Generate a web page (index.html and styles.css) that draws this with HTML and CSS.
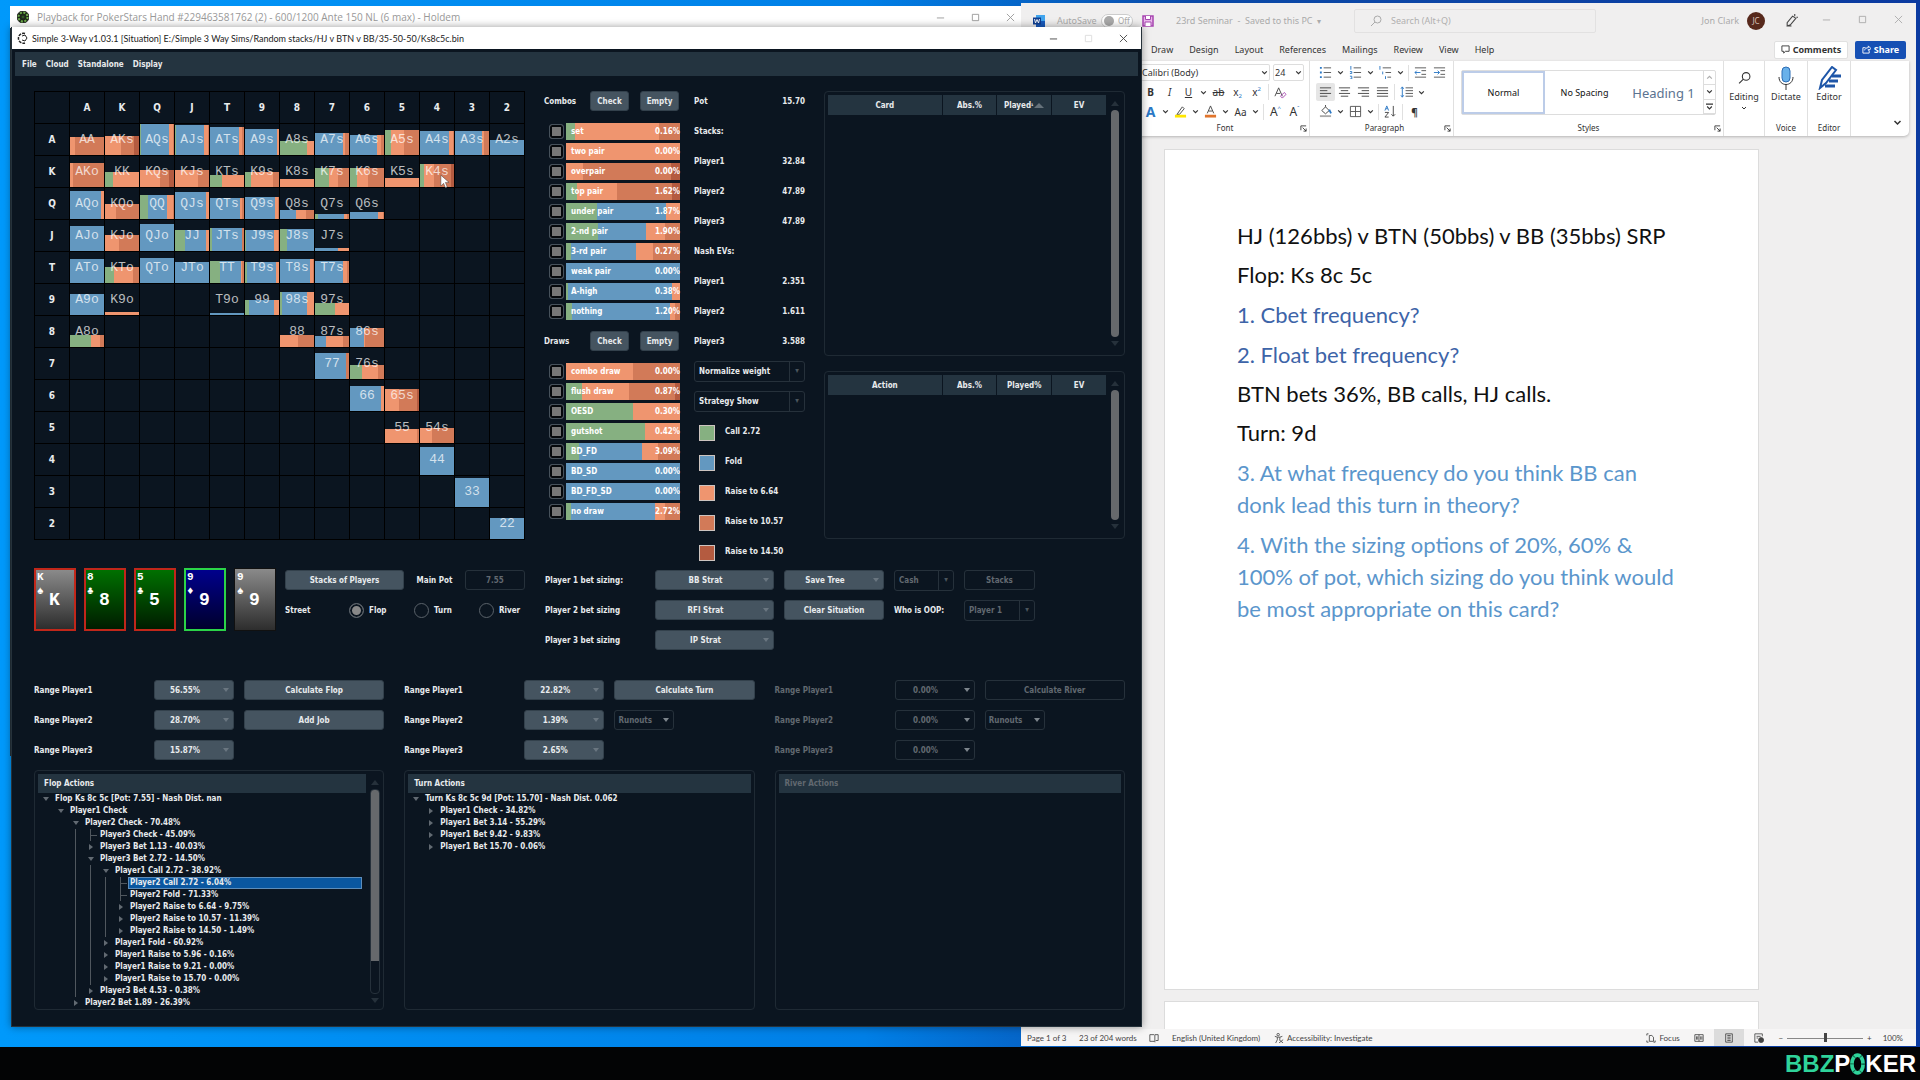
FILE: index.html
```
<!DOCTYPE html>
<html lang="en">
<head>
  <meta charset="UTF-8">
  <title>Simple 3-Way</title>
  <link rel="stylesheet" href="styles.css">
</head>
<body>
  <svg class="sprite" aria-hidden="true">
    <symbol id="min" viewBox="0 0 10 10"><path d="M1 5.5h8" /></symbol>
    <symbol id="max" viewBox="0 0 10 10"><path d="M1.5 1.5h7v7h-7z" /></symbol>
    <symbol id="close" viewBox="0 0 10 10"><path d="M1 1l8 8M9 1l-8 8" /></symbol>
    <symbol id="caret" viewBox="0 0 6 6"><path d="M1 2l2 2 2-2" /></symbol>
    <symbol id="search" viewBox="0 0 12 12"><circle cx="7.5" cy="4.5" r="3.5" /><path d="M5 7L1 11" /></symbol>
    <symbol id="launch" viewBox="0 0 8 8"><path d="M1 6V1h6M3 3l4 4M7 4v3H4" /></symbol>
  </svg>

  <div class="desktop">
    <!-- Hand replayer, behind -->
    <div class="window replayer">
      <div class="titlebar">
        <svg class="app-icon" viewBox="0 0 12 12"><circle cx="6" cy="6" r="6" fill="#1c2a17" /><circle cx="6" cy="6" r="4.5" fill="none" stroke="#6fae4c" stroke-width="2" stroke-dasharray="2 1.5" /><circle cx="6" cy="6" r="2" fill="#2e5a22" /></svg>
        <span class="title">Playback for PokerStars Hand #229463581762 (2) - 600/1200 Ante 150 NL (6 max) - Holdem</span>
        <button aria-label="Minimize"><svg><use href="#min" /></svg></button>
        <button aria-label="Maximize"><svg><use href="#max" /></svg></button>
        <button aria-label="Close"><svg><use href="#close" /></svg></button>
      </div>
    </div>

    <!-- Word -->
    <div class="window word">
      <div class="word-title">
        <svg class="word-icon" viewBox="0 0 12 12"><path d="M3 0h9v12H3z" fill="#41a5ee" /><path d="M3 6h9v6H3z" fill="#185abd" /><path d="M0 2.500h8v7H0z" fill="#103f91" /><path d="M1.500 4l1 4L4 4.500 5.500 8l1-4" fill="none" stroke="#fff" stroke-width=".9" /></svg>
        <span class="autosave">AutoSave</span>
        <button class="switch" aria-label="AutoSave off"><i></i>Off</button>
        <button class="save" aria-label="Save"><svg viewBox="0 0 12 12"><path d="M1 1h10v10H1z" fill="#e9b6ea" stroke="#a646b0" stroke-width="1.500" /><path d="M3.500 1v3.500h5V1M3 11V7h6v4" fill="#fff" stroke="#a646b0" /></svg></button>
        <span class="doc-name">23rd Seminar&nbsp; -&nbsp; Saved to this PC&nbsp; <small>▾</small></span>
        <label class="search"><svg><use href="#search" /></svg><input type="text" placeholder="Search (Alt+Q)" aria-label="Search"></label>
        <span class="user">Jon Clark</span>
        <span class="avatar">JC</span>
        <button class="pen" aria-label="Pen"><svg viewBox="0 0 12 12"><path d="M2 11V8l5-6 3 2-5 6zM3 11h3M9 0v2M12 3h-1.500" /></svg></button>
        <button class="winbtn" aria-label="Minimize"><svg><use href="#min" /></svg></button>
        <button class="winbtn" aria-label="Maximize"><svg><use href="#max" /></svg></button>
        <button class="winbtn" aria-label="Close"><svg><use href="#close" /></svg></button>
      </div>
      <nav class="tabs">
        <a href="#">Draw</a><a href="#">Design</a><a href="#">Layout</a><a href="#">References</a><a href="#">Mailings</a><a href="#">Review</a><a href="#">View</a><a href="#">Help</a>
        <button class="comments"><svg viewBox="0 0 10 10"><path d="M1 1h8v6H5L3 9V7H1z" /></svg>Comments</button>
        <button class="share"><svg viewBox="0 0 10 10"><path d="M4 3H1v6h7V6M3 6c0-2 2-3 4-3V1l3 3-3 2V4.500" /></svg>Share</button>
      </nav>
      <div class="ribbon">
        <div class="group font-group">
          <div class="tools">
            <span class="pick font-name"><select aria-label="Font"><option>Calibri (Body)</option></select><svg><use href="#caret" /></svg></span>
            <span class="pick font-size"><select aria-label="Font size"><option>24</option></select><svg><use href="#caret" /></svg></span>
          </div>
          <div class="tools">
            <button><b>B</b></button><button><em>I</em></button><button><u>U</u></button><button class="drop"><svg><use href="#caret" /></svg></button>
            <button><s>ab</s></button><button>x<sub>2</sub></button><button>x<sup>2</sup></button><hr>
            <button aria-label="Clear formatting"><svg viewBox="0 0 14 14"><path d="M1 11L5 2l4 9M2.500 8h4" stroke="#444" /><path d="M7 11l4-4 2 2-4 4z" stroke="#a646b0" /></svg></button>
          </div>
          <div class="tools">
            <button class="effects">A</button><button class="drop"><svg><use href="#caret" /></svg></button>
            <button aria-label="Highlight"><svg viewBox="0 0 14 14"><path d="M4 9l5-7 2 2-5 6H3z" stroke="#444" /><path d="M1 12h12" stroke="#ffe600" stroke-width="3" /></svg></button><button class="drop"><svg><use href="#caret" /></svg></button>
            <button aria-label="Font colour"><svg viewBox="0 0 14 14"><path d="M3.500 9L7 1l3.500 8M5 6.500h4" stroke="#444" /><path d="M1 12h12" stroke="#e0752d" stroke-width="3" /></svg></button><button class="drop"><svg><use href="#caret" /></svg></button>
            <button>Aa</button><button class="drop"><svg><use href="#caret" /></svg></button><hr>
            <button class="grow">A<sup>^</sup></button><button class="grow">A<sup>ˇ</sup></button>
          </div>
          <div class="group-name">Font<svg><use href="#launch" /></svg></div>
        </div>
        <div class="group para-group">
          <div class="tools">
            <button aria-label="Bullets"><svg viewBox="0 0 14 14"><path d="M5 2h8M5 7h8M5 12h8" stroke="#555" /><path d="M1 2h2M1 7h2M1 12h2" stroke="#2b78c5" stroke-width="2" /></svg></button><button class="drop"><svg><use href="#caret" /></svg></button>
            <button aria-label="Numbering"><svg viewBox="0 0 14 14"><path d="M5 2h8M5 7h8M5 12h8" stroke="#555" /><path d="M2 0v4M1 6h2v2H1M1 11h2v3H1" stroke="#2b78c5" /></svg></button><button class="drop"><svg><use href="#caret" /></svg></button>
            <button aria-label="Multilevel list"><svg viewBox="0 0 14 14"><path d="M4 2h9M7 7h6M9 12h4" stroke="#555" /><path d="M1 0v4M4 6v3M7 11v3" stroke="#2b78c5" /></svg></button><button class="drop"><svg><use href="#caret" /></svg></button><hr>
            <button aria-label="Outdent"><svg viewBox="0 0 14 14"><path d="M1 2h12M8 5h5M8 9h5M1 12h12" stroke="#555" /><path d="M7 7H1l2-2M1 7l2 2" stroke="#2b78c5" /></svg></button>
            <button aria-label="Indent"><svg viewBox="0 0 14 14"><path d="M1 2h12M8 5h5M8 9h5M1 12h12" stroke="#555" /><path d="M1 7h6L5 5M7 7L5 9" stroke="#2b78c5" /></svg></button>
          </div>
          <div class="tools">
            <button class="on" aria-label="Left"><svg viewBox="0 0 14 14"><path d="M1 2h12M1 5h8M1 8h12M1 11h8" stroke="#444" /></svg></button>
            <button aria-label="Centre"><svg viewBox="0 0 14 14"><path d="M1 2h12M3 5h8M1 8h12M3 11h8" stroke="#444" /></svg></button>
            <button aria-label="Right"><svg viewBox="0 0 14 14"><path d="M1 2h12M5 5h8M1 8h12M5 11h8" stroke="#444" /></svg></button>
            <button aria-label="Justify"><svg viewBox="0 0 14 14"><path d="M1 2h12M1 5h12M1 8h12M1 11h12" stroke="#444" /></svg></button><hr>
            <button aria-label="Line spacing"><svg viewBox="0 0 14 14"><path d="M6 2h8M6 5h8M6 8h8M6 11h8" stroke="#555" /><path d="M2.500 1v11M1 3l1.500-2L4 3M1 10l1.500 2L4 10" stroke="#2b78c5" /></svg></button><button class="drop"><svg><use href="#caret" /></svg></button>
          </div>
          <div class="tools">
            <button aria-label="Shading"><svg viewBox="0 0 14 14"><path d="M3 6l4-4 4 4-4 3.500zM7 2V0" stroke="#444" /><path d="M11 5l2 4" stroke="#2b78c5" stroke-width="2" /><path d="M1 12h12" stroke="#aaa" stroke-width="2" /></svg></button><button class="drop"><svg><use href="#caret" /></svg></button>
            <button aria-label="Borders"><svg viewBox="0 0 14 14"><path d="M1.500 1.500h11v11h-11zM7 1.500v11M1.500 7h11" stroke="#555" /></svg></button><button class="drop"><svg><use href="#caret" /></svg></button><hr>
            <button aria-label="Sort"><svg viewBox="0 0 14 14"><path d="M1 6l2-5 2 5M2 4h2" stroke="#2b78c5" /><path d="M1 8h4l-4 5h4M10 1v11M8 10l2 2 2-2" stroke="#444" /></svg></button><hr>
            <button><b>¶</b></button>
          </div>
          <div class="group-name">Paragraph<svg><use href="#launch" /></svg></div>
        </div>
        <div class="group style-group">
          <div class="gallery">
            <button class="current">Normal</button>
            <button>No Spacing</button>
            <button class="heading">Heading 1</button>
            <div class="gallery-nav"><button aria-label="Up"><svg class="flip"><use href="#caret" /></svg></button><button aria-label="Down"><svg><use href="#caret" /></svg></button><button aria-label="More"><svg viewBox="0 0 6 6"><path d="M0 1h6M1 3l2 2 2-2" /></svg></button></div>
          </div>
          <div class="group-name">Styles<svg><use href="#launch" /></svg></div>
        </div>
        <div class="group big">
          <button><svg class="big-icon"><use href="#search" /></svg>Editing<svg class="small"><use href="#caret" /></svg></button>
        </div>
        <div class="group big">
          <button><svg class="big-icon" viewBox="0 0 16 24"><rect x="4" y="1" width="8" height="15" rx="4" fill="#69b1ea" stroke="#2b6cb5" /><path d="M1 11c0 10 14 10 14 0M8 19v5" /></svg>Dictate</button>
          <div class="group-name">Voice</div>
        </div>
        <div class="group big">
          <button><svg class="big-icon" viewBox="0 0 24 24"><path d="M3 22l2-8L15 1l4 3L9 17z" fill="#fff" stroke="#1e56a8" stroke-width="2" /><path d="M15 10h9M12 15h9M8 20h10" stroke="#1e56a8" stroke-width="3" /></svg>Editor</button>
          <div class="group-name">Editor</div>
        </div>
        <button class="collapse" aria-label="Collapse ribbon"><svg><use href="#caret" /></svg></button>
      </div>
      <div class="canvas">
        <article class="page">
          <p>HJ (126bbs) v BTN (50bbs) v BB (35bbs) SRP</p>
          <p>Flop: Ks 8c 5c</p>
          <p class="question">1. Cbet frequency?</p>
          <p class="question">2. Float bet frequency?</p>
          <p>BTN bets 36%, BB calls, HJ calls.</p>
          <p>Turn: 9d</p>
          <p class="question light">3. At what frequency do you think BB can<br>donk lead this turn in theory?</p>
          <p class="question light">4. With the sizing options of 20%, 60% &amp;<br>100% of pot, which sizing do you think would<br>be most appropriate on this card?</p>
        </article>
        <article class="page next"></article>
      </div>
      <footer class="status">
        <span class="page-count">Page 1 of 3</span>
        <span class="words">23 of 204 words</span>
        <svg class="proof" viewBox="0 0 12 12"><path d="M6 2H1v8h5l1 1V2h4v7H8" /></svg>
        <span class="lang">English (United Kingdom)</span>
        <svg viewBox="0 0 12 12"><circle cx="5" cy="2" r="1.500" /><path d="M1 4l3 1h3l3-1M4 5v3l-2 4M7 5v3M6 8l5 4M11 8l-5 4" /></svg>
        <span>Accessibility: Investigate</span>
        <span class="view-tools">
          <svg viewBox="0 0 12 12"><path d="M1 3V1h2M1 9v2h2M11 9v2H9M4 3h3l2 2v5H4z" /></svg><span class="focus">Focus</span>
          <button class="view" aria-label="Read mode"><svg viewBox="0 0 12 12"><path d="M6 2H1v8h5zM6 2h5v8H6M3 4v4M4.500 4v4M8 4v4M9.500 4v4" /></svg></button>
          <button class="view on" aria-label="Print layout"><svg viewBox="0 0 12 12"><path d="M2 1h8v10H2zM4 3h4M4 5h4M4 7h4M4 9h4" /></svg></button>
          <button class="view" aria-label="Web layout"><svg viewBox="0 0 12 12"><path d="M10 4V1H1v10h4M3 4h5M3 6h2" /><circle cx="8.500" cy="8.500" r="3" fill="#444" /></svg></button>
          <span class="minus">−</span><input type="range" aria-label="Zoom" value="50"><span>+</span><span class="percent">100%</span>
        </span>
      </footer>
    </div>

    <!-- Solver -->
    <div class="window solver">
      <div class="titlebar">
        <svg class="app-icon" viewBox="0 0 12 12" fill="none" stroke="#555a80"><path d="M9 1.500A5 5 0 1 0 9 11" stroke-width="1.500" stroke-dasharray="3 1" /><path d="M6 4l3-1 2 3-2 3-3-1" /></svg>
        <span class="title">Simple 3-Way v1.03.1 [Situation] E:/Simple 3 Way Sims/Random stacks/HJ v BTN v BB/35-50-50/Ks8c5c.bin</span>
        <button aria-label="Minimize"><svg><use href="#min" /></svg></button>
        <button aria-label="Maximize" class="faint" disabled><svg><use href="#max" /></svg></button>
        <button aria-label="Close"><svg><use href="#close" /></svg></button>
      </div>
      <nav class="menubar"><a href="#">File</a><a href="#">Cloud</a><a href="#">Standalone</a><a href="#">Display</a></nav>
      <main class="content">
        <section class="top">
          <div class="hands" id="hands"></div>
          <div class="filters">
            <div class="filter-head"><span>Combos</span><button class="btn">Check</button><button class="btn">Empty</button></div>
            <div class="filter-list" id="combos"></div>
            <div class="filter-head"><span>Draws</span><button class="btn">Check</button><button class="btn">Empty</button></div>
            <div class="filter-list" id="draws"></div>
          </div>
          <div class="info">
            <div class="line"><span>Pot</span><span>15.70</span></div>
            <div class="line">Stacks:</div>
            <div class="line"><span>Player1</span><span>32.84</span></div>
            <div class="line"><span>Player2</span><span>47.89</span></div>
            <div class="line"><span>Player3</span><span>47.89</span></div>
            <div class="line">Nash EVs:</div>
            <div class="line"><span>Player1</span><span>2.351</span></div>
            <div class="line"><span>Player2</span><span>1.611</span></div>
            <div class="line"><span>Player3</span><span>3.588</span></div>
            <div class="line"><span class="combo"><select aria-label="Weight"><option>Normalize weight</option></select></span></div>
            <div class="line"><span class="combo"><select aria-label="Strategy"><option>Strategy Show</option></select></span></div>
            <div class="line legend"><i class="call"></i>Call 2.72</div>
            <div class="line legend"><i class="fold"></i>Fold</div>
            <div class="line legend"><i class="r1"></i>Raise to 6.64</div>
            <div class="line legend"><i class="r2"></i>Raise to 10.57</div>
            <div class="line legend"><i class="r3"></i>Raise to 14.50</div>
          </div>
          <div class="tables">
            <div class="panel card-panel">
              <table><thead><tr><th class="wide">Card</th><th>Abs.%</th><th class="sorted">Played<small>¹</small></th><th>EV</th></tr></thead></table>
              <div class="scroll"><b></b></div>
            </div>
            <div class="panel action-panel">
              <table><thead><tr><th class="wide">Action</th><th>Abs.%</th><th>Played%</th><th>EV</th></tr></thead></table>
              <div class="scroll"><b></b></div>
            </div>
          </div>
        </section>

        <section class="controls">
          <div class="board">
            <div class="card gray picked"><span>K</span><span>♠</span><b>K</b></div>
            <div class="card green picked"><span>8</span><span>♣</span><b>8</b></div>
            <div class="card green picked"><span>5</span><span>♣</span><b>5</b></div>
            <div class="card blue turn"><span>9</span><span>♦</span><b>9</b></div>
            <div class="card gray"><span>9</span><span>♠</span><b>9</b></div>
          </div>
          <div class="spot">
            <div class="row"><button class="btn stacks">Stacks of Players</button><label for="pot">Main Pot</label><input type="text" id="pot" value="7.55" disabled></div>
            <div class="row street"><span>Street</span>
              <label><input type="radio" name="street" checked>Flop</label>
              <label><input type="radio" name="street">Turn</label>
              <label><input type="radio" name="street">River</label></div>
          </div>
          <div class="sizing">
            <span>Player 1 bet sizing:</span><button class="btn menu">BB Strat</button><button class="btn menu">Save Tree</button><span class="combo off"><select aria-label="Game" disabled><option>Cash</option></select></span><button class="btn" disabled>Stacks</button>
            <span>Player 2 bet sizing</span><button class="btn menu">RFI Strat</button><button class="btn">Clear Situation</button><label for="oop">Who is OOP:</label><span class="combo off"><select id="oop" disabled><option>Player 1</option></select></span>
            <span>Player 3 bet sizing</span><button class="btn menu">IP Strat</button>
          </div>
        </section>

        <section class="streets">
          <div class="ranges">
            <span>Range Player1</span><button class="btn menu">56.55%</button><button class="btn">Calculate Flop</button>
            <span>Range Player2</span><button class="btn menu">28.70%</button><button class="btn">Add Job</button>
            <span>Range Player3</span><button class="btn menu">15.87%</button>
          </div>
          <div class="ranges">
            <span>Range Player1</span><button class="btn menu">22.82%</button><button class="btn">Calculate Turn</button>
            <span>Range Player2</span><button class="btn menu">1.39%</button><button class="btn menu runouts" disabled>Runouts</button>
            <span>Range Player3</span><button class="btn menu">2.65%</button>
          </div>
          <div class="ranges off">
            <span>Range Player1</span><button class="btn menu" disabled>0.00%</button><button class="btn" disabled>Calculate River</button>
            <span>Range Player2</span><button class="btn menu" disabled>0.00%</button><button class="btn menu runouts" disabled>Runouts</button>
            <span>Range Player3</span><button class="btn menu" disabled>0.00%</button>
          </div>
        </section>

        <section class="streets trees">
          <div class="panel">
            <div class="tree-wrap"><h2>Flop Actions</h2><ul class="tree" id="flopTree"></ul></div>
            <div class="scroll part"><b></b></div>
          </div>
          <div class="panel">
            <div class="tree-wrap"><h2>Turn Actions</h2><ul class="tree" id="turnTree"></ul></div>
          </div>
          <div class="panel off">
            <div class="tree-wrap"><h2>River Actions</h2></div>
          </div>
        </section>
      </main>
    </div>

    <svg class="pointer" viewBox="0 0 10 16"><path d="M1 1v12l3-3 2 5 2-1-2-5h4z" fill="#fff" stroke="#333" stroke-width=".5" /></svg>
  </div>

  <div class="brand"><span>BBZ</span>P<svg viewBox="0 0 16 24"><ellipse cx="8" cy="12" rx="6" ry="9.500" fill="none" stroke="#2fd39a" stroke-width="4" /><ellipse cx="8" cy="12" rx="6" ry="9.500" fill="none" stroke="#0d6b4c" stroke-width="4" stroke-dasharray="1 7" /></svg>KER</div>

  <script>
    const ranks = 'AKQJT98765432';

    // hand: bar height, then colour + share pairs (g call, b fold, 1-3 raises)
    const hands = {
      AA: '18 1:14 2:86', AKs: '19 1:46 2:38 3:16', AQs: '31 g:4 b:80 1:12 2:4', AJs: '30 g:3 b:83 1:11 2:3',
      ATs: '28 b:85 1:10 2:5', A9s: '26 b:94 1:6', A8s: '14 g:80 1:20', A7s: '22 b:82 1:5 2:13', A6s: '20 b:78 1:13 2:9',
      A5s: '25 g:18 1:37 2:45', A4s: '24 b:86 1:10 2:4', A3s: '24 b:78 1:8 2:14', A2s: '15 b:100',
      AKo: '24 1:9 2:91', KK: '15 g:24 1:76', KQs: '17 1:60 2:26 3:14', KJs: '17 1:68 2:32', KTs: '12 g:35 1:65',
      K9s: '15 g:17 1:65 2:18', K8s: '8 1:100', K7s: '19 g:40 1:27 2:33', K6s: '19 g:22 1:32 2:46', K5s: '9 1:100',
      K4s: '23 g:12 1:28 2:50 3:10',
      AQo: '28 b:90 1:10', KQo: '15 1:33 2:67', QQ: '24 g:24 b:56 1:16 2:4', QJs: '27 b:90 1:10', QTs: '21 b:89 1:6 2:5',
      Q9s: '22 b:87 1:10 2:3', Q8s: '9 b:46 1:30 2:24', Q7s: '5 g:8 b:77 1:8 2:7', Q6s: '7 b:82 1:14 2:4',
      AJo: '25 b:100', KJo: '16 1:40 2:60', QJo: '27 b:100', JJ: '21 g:30 b:61 1:9', JTs: '23 g:5 b:88 2:7',
      J9s: '21 g:2 b:82 1:13 2:3', J8s: '22 g:20 b:80', J7s: '3 b:69 1:31',
      ATo: '24 b:100', KTo: '16 g:25 1:58 2:17', QTo: '25 b:100', JTo: '21 b:100', TT: '22 g:30 b:62 1:3 2:5',
      T9s: '21 g:5 b:87 1:8', T8s: '24 b:88 1:8 2:4', T7s: '22 b:82 1:13 2:5',
      A9o: '21 b:100', K9o: '3 1:100', T9o: '2 b:100', 99: '15 g:12 b:74 1:14', '98s': '23 g:5 b:73 1:22', '97s': '12 g:58 1:42',
      A8o: '12 g:61 1:27 2:12', 88: '12 1:52 2:48', '87s': '11 b:32 1:50 2:18', '86s': '19 b:40 1:5 2:55',
      77: '26 b:90 2:10', '76s': '14 g:36 1:46 2:18', 66: '25 b:91 1:9', '65s': '22 1:42 2:52 3:6',
      55: '14 1:95 2:5', '54s': '15 1:35 2:65', 44: '28 b:100', 33: '29 b:100', 22: '21 b:100'
    };

    const classes = { g: 'call', b: 'fold', 1: 'r1', 2: 'r2', 3: 'r3' };

    function segments(parts) {
      return parts.map(part => {
        const [key, share] = part.split(':');
        return `<i class="${classes[key]}" style="width:${share}%"></i>`;
      }).join('');
    }

    // hand matrix
    let html = '<div class="head"></div>' + [...ranks].map(r => `<div class="head">${r}</div>`).join('');
    [...ranks].forEach((row, y) => {
      html += `<div class="head">${row}</div>`;
      [...ranks].forEach((col, x) => {
        const name = x === y ? row + col : x > y ? row + col + 's' : col + row + 'o';
        if (!hands[name]) {
          html += '<div></div>';
          return;
        }
        const [height, ...parts] = hands[name].split(' ');
        html += `<div class="hand"><span class="fill" style="height:${height}px">${segments(parts)}</span><span>${name}</span></div>`;
      });
    });
    document.getElementById('hands').innerHTML = html;

    // made hands and draws
    const combos = [
      ['set', '0.16', 'g:8 1:74 2:18'], ['two pair', '0.00', '1:100'], ['overpair', '0.00', '1:15 2:77 3:8'],
      ['top pair', '1.62', 'g:10 1:35 2:48 3:7'], ['under pair', '1.87', 'g:27 b:61 1:12'],
      ['2-nd pair', '1.90', 'g:28 b:42 1:17 2:13'], ['3-rd pair', '0.27', 'g:4 b:57 1:15 2:24'],
      ['weak pair', '0.00', 'b:100'], ['A-high', '0.38', 'g:2 b:91 1:7'], ['nothing', '1.20', 'g:5 b:86 1:5 2:4']
    ];
    const draws = [
      ['combo draw', '0.00', '1:59 2:41'], ['flush draw', '0.87', 'g:14 1:41 2:41 3:4'], ['OESD', '0.30', 'g:59 1:41'],
      ['gutshot', '0.42', 'g:69 1:31'], ['BD_FD', '3.09', 'g:11 b:56 1:14 2:19'], ['BD_SD', '0.00', 'b:100'],
      ['BD_FD_SD', '0.00', 'b:100'], ['no draw', '2.72', 'g:4 b:74 1:9 2:13']
    ];

    function fillList(id, rows) {
      document.getElementById(id).innerHTML = rows.map(([name, pct, parts]) => `
        <label><input type="checkbox" checked><span class="bar"><span class="fill">${segments(parts.split(' '))}</span><span>${name}</span><span>${pct}%</span></span></label>`).join('');
    }
    fillList('combos', combos);
    fillList('draws', draws);

    // action trees: [label, children], no children = leaf, [] = closed
    const flop = ['Flop Ks 8c 5c [Pot: 7.55] - Nash Dist. nan', [
      ['Player1 Check', [
        ['Player2 Check - 70.48%', [
          ['Player3 Check - 45.09%'],
          ['Player3 Bet 1.13 - 40.03%', []],
          ['Player3 Bet 2.72 - 14.50%', [
            ['Player1 Call 2.72 - 38.92%', [
              ['Player2 Call 2.72 - 6.04%'],
              ['Player2 Fold - 71.33%'],
              ['Player2 Raise to 6.64 - 9.75%', []],
              ['Player2 Raise to 10.57 - 11.39%', []],
              ['Player2 Raise to 14.50 - 1.49%', []]
            ]],
            ['Player1 Fold - 60.92%', []],
            ['Player1 Raise to 5.96 - 0.16%', []],
            ['Player1 Raise to 9.21 - 0.00%', []],
            ['Player1 Raise to 15.70 - 0.00%', []]
          ]],
          ['Player3 Bet 4.53 - 0.38%', []]
        ]],
        ['Player2 Bet 1.89 - 26.39%', []]
      ]]
    ]];
    const turn = ['Turn Ks 8c 5c 9d [Pot: 15.70] - Nash Dist. 0.062', [
      ['Player1 Check - 34.82%', []],
      ['Player1 Bet 3.14 - 55.29%', []],
      ['Player1 Bet 9.42 - 9.83%', []],
      ['Player1 Bet 15.70 - 0.06%', []]
    ]];

    function node([label, children], depth) {
      const state = !children ? 'leaf' : children.length ? 'open' : 'closed';
      const selected = label.startsWith('Player2 Call') ? ' selected' : '';
      const inner = state === 'open'
        ? `<ul class="${depth > 1 ? 'guide' : ''}">${children.map(c => node(c, depth + 1)).join('')}</ul>` : '';
      return `<li><div class="node"><i class="${state}"></i><span class="label${selected}">${label}</span></div>${inner}</li>`;
    }
    document.getElementById('flopTree').innerHTML = node(flop, 0);
    document.getElementById('turnTree').innerHTML = node(turn, 0);
  </script>
</body>
</html>
```
FILE: styles.css
```
* {
  box-sizing: border-box;
}

body {
  margin: 0;
  height: 100vh;
  display: flex;
  flex-direction: column;
  background: #030405;
  font-family: "Noto Sans", sans-serif;
  font-size: 9px;
  overflow: hidden;
}

button, input, select {
  font: inherit;
  color: inherit;
  margin: 0;
  padding: 0;
  border: 0;
  background: none;
}

a {
  color: inherit;
  text-decoration: none;
}

svg {
  fill: none;
  stroke: currentColor;
  flex: none;
}

.sprite {
  display: none;
}

.call { background: #86b081; }
.fold { background: #6398c0; }
.r1 { background: #ef956f; }
.r2 { background: #d27a58; }
.r3 { background: #b45b40; }

.desktop {
  flex: 1;
  position: relative;
  background: linear-gradient(90deg, #0099fb, #007fe6 45%, #0b4aa8 62%, #0b3aa0);
}

.window {
  position: absolute;
  display: flex;
  flex-direction: column;
}

.titlebar {
  flex: none;
  display: flex;
  align-items: center;
  height: 22px;
  background: #fff;
  font-family: "Open Sans", sans-serif;
  font-size: 10px;
  color: #222;
}

.titlebar .title { flex: 1; }
.titlebar button { width: 35px; height: 22px; display: grid; place-items: center; color: #444; }
.titlebar button svg { width: 9px; height: 9px; }
.titlebar .faint { color: #ddd; }
.app-icon { width: 12px; height: 12px; margin: 0 8px 0 7px; }

.replayer {
  left: 10px;
  top: 6px;
  width: 53%;
  height: 750px;
  background: #26323b;
}

.replayer .title, .replayer button { color: #999; }

/* solver window */
.solver {
  left: 11px;
  top: 27px;
  bottom: 20px;
  width: 58.9%;
  background: #0b1520;
  border: 1px solid #26323b;
  border-top: 0;
  box-shadow: 0 0 8px rgba(0, 0, 0, 0.4);
  color: #e8ebed;
  font-family: "DejaVu Sans Condensed", "Noto Sans", sans-serif;
  font-size: 8px;
  font-weight: bold;
}

.solver .titlebar {
  font-family: Lato, sans-serif;
  font-size: 9px;
  font-weight: normal;
}

.solver .app-icon { margin: 0 4px; }

.menubar {
  flex: none;
  display: flex;
  align-items: center;
  gap: 9px;
  height: 24px;
  margin: 3px 3px 0;
  padding: 0 7px;
  background: #243440;
}

.content {
  flex: 1;
  min-height: 0;
  display: flex;
  flex-direction: column;
  padding: 10px 16px 16px 22px;
}

.top { display: flex; }

.hands {
  display: grid;
  grid-template-columns: repeat(14, 35px);
  grid-auto-rows: 32px;
  align-self: flex-start;
  margin-top: 5px;
  border: 1px solid #000;
  border-width: 0 1px 1px 0;
  background: #0b1520;
}

.hands > div {
  border: 1px solid #000;
  border-width: 1px 0 0 1px;
  display: grid;
  place-items: center;
  position: relative;
}

.hands .head { font-size: 10px; }

.hand {
  font-family: "Liberation Mono", monospace;
  font-size: 13px;
  font-weight: normal;
  color: rgba(255, 255, 255, 0.72);
}

.hand > span { position: relative; }

.fill { display: flex; }

.hand .fill, .bar .fill {
  position: absolute;
  left: 0;
  right: 0;
  bottom: 0;
}

.filters { width: 136px; margin-left: 19px; }

.filter-head {
  display: flex;
  align-items: center;
  height: 30px;
  gap: 11px;
}

.filter-head span { width: 35px; }
.filter-head .btn { width: 39px; }
.filter-list { padding: 5px 0; }

.filter-list label {
  display: flex;
  align-items: center;
  gap: 2px;
  height: 20px;
  padding-left: 5px;
}

.filter-list input {
  appearance: none;
  width: 15px;
  height: 15px;
  border: 1px solid #46515b;
  border-radius: 3px;
  background: #777;
  box-shadow: inset 0 0 0 2px #05080c;
}

.bar {
  flex: 1;
  display: flex;
  justify-content: space-between;
  align-items: center;
  height: 17px;
  padding-left: 5px;
  position: relative;
  color: #fff;
}

.bar .fill { top: 0; }
.bar > span:not(.fill) { position: relative; }

.info { width: 111px; margin-left: 14px; }

.line {
  display: flex;
  align-items: center;
  justify-content: space-between;
  height: 30px;
}

.legend { justify-content: flex-start; gap: 10px; padding-left: 5px; }
.legend i { width: 16px; height: 16px; margin-top: 3px; border: 1px solid #cdc4c0; }

.combo {
  position: relative;
  display: block;
  width: 100%;
}

.combo select {
  appearance: none;
  width: 100%;
  height: 21px;
  padding-left: 4px;
  border: 1px solid #26313b;
  border-radius: 3px;
  background: #0b1520;
}

.combo::after {
  content: "▾";
  position: absolute;
  right: 1px;
  top: 1px;
  width: 14px;
  height: 19px;
  line-height: 18px;
  border-left: 1px solid #26313b;
  text-align: center;
  color: #4b555e;
  pointer-events: none;
}

.off, .off select { color: #626970; opacity: 1; }

.btn {
  height: 20px;
  border-radius: 3px;
  background: #455460;
  border: 1px solid #33414c;
  text-align: center;
}

.btn:disabled {
  background: none;
  border-color: #26313b;
  color: #626970;
}

.menu {
  position: relative;
  padding-right: 18px;
}

.menu::after {
  content: "";
  position: absolute;
  right: 4px;
  top: 7px;
  border: 3px solid transparent;
  border-top: 4px solid #6a7680;
  border-bottom: 0;
}

.tables {
  flex: 1;
  min-width: 0;
  margin: 5px 0 0 19px;
}

.panel {
  display: flex;
  border: 1px solid #1f2a34;
  border-radius: 4px;
  padding: 3px;
}

.card-panel { height: 265px; margin-bottom: 15px; }
.action-panel { height: 168px; }

.panel table {
  flex: 1;
  width: 100%;
  align-self: flex-start;
  border-collapse: collapse;
  table-layout: fixed;
}

.panel th {
  height: 20px;
  padding: 0;
  background: #243440;
  border-right: 1px solid #0b1520;
  text-align: center;
}

.panel .wide { width: 41%; }

.sorted::after {
  content: "";
  display: inline-block;
  margin-left: 1px;
  border: 5px solid transparent;
  border-bottom: 5px solid #66727b;
  border-top: 0;
}

.sorted small { font-size: 6px; }

.scroll {
  flex: none;
  width: 11px;
  margin-left: 3px;
  display: flex;
  flex-direction: column;
  align-items: center;
  padding: 6px 0;
}

.scroll::before, .scroll::after {
  content: "";
  border: 4px solid transparent;
  border-bottom: 5px solid #26313b;
  border-top: 0;
}

.scroll::after { transform: rotate(180deg); }

.scroll b {
  flex: 1;
  width: 8px;
  margin: 4px 0;
  border-radius: 4px;
  background: #66696c;
}

.scroll.part b {
  width: 10px;
  border: 1px solid #26313b;
  background: linear-gradient(#66696c 84%, transparent 84%);
}

/* board and bet sizing */
.controls {
  flex: none;
  display: flex;
  height: 90px;
  margin-bottom: 20px;
}

.board { display: flex; gap: 8px; padding-top: 2px; }

.card {
  width: 42px;
  height: 63px;
  padding: 2px 2px;
  border: 1px solid #111;
  display: grid;
  grid-template: 14px 20px 1fr / 12px 1fr;
  color: #fff;
  font-family: "Liberation Mono", monospace;
  font-size: 11px;
  line-height: 13px;
}

.card span { grid-column: 1; }

.card b {
  grid-area: 2 / 2 / 4 / 3;
  font-size: 18px;
  line-height: 30px;
}

.gray { background: linear-gradient(#8a8a8a, #2d2d2d); }
.green { background: linear-gradient(#007000, #001c00); }
.blue { background: linear-gradient(#00008c, #00002c); }
.picked { border: 2px solid #c1271a; padding: 1px; }
.turn { border: 2px solid #2bd448; padding: 1px; }

.spot { width: 240px; margin-left: 9px; }

.row {
  display: flex;
  align-items: center;
  justify-content: space-between;
  height: 30px;
  padding-bottom: 2px;
}

.row .stacks { width: 119px; }

.row input[type="text"] {
  width: 60px;
  height: 20px;
  border: 1px solid #26313b;
  border-radius: 3px;
  color: #626970;
  text-align: center;
}

.street {
  display: grid;
  grid-template-columns: 64px 65px 65px 1fr;
}

.street label { display: flex; align-items: center; gap: 5px; }

.street input {
  appearance: none;
  width: 15px;
  height: 15px;
  border: 1px solid #5a626a;
  border-radius: 50%;
}

.street input:checked {
  background: #888;
  box-shadow: inset 0 0 0 2px #0b1520;
}

.sizing {
  display: grid;
  grid-template-columns: 100px 119px 100px 60px 71px;
  grid-auto-rows: 20px;
  gap: 10px;
  align-items: center;
  align-self: flex-start;
  margin-left: 20px;
  padding-top: 4px;
}

.streets {
  flex: none;
  display: grid;
  grid-template-columns: repeat(3, 1fr);
  gap: 20px;
}

.ranges {
  display: grid;
  grid-template-columns: 110px 80px 1fr;
  grid-auto-rows: 20px;
  gap: 10px;
  align-items: center;
  align-content: start;
  height: 94px;
  padding-top: 4px;
}

.runouts { width: 60px; }
.menu:disabled::after { border-top-color: #7d858c; }

/* action trees */
.trees { flex: 1; min-height: 0; }
.trees .panel { min-height: 0; padding-bottom: 0; overflow: hidden; }
.tree-wrap { flex: 1; overflow: hidden; }

.trees h2 {
  margin: 0;
  height: 19px;
  padding-left: 6px;
  line-height: 19px;
  background: #243440;
  font-size: 8px;
}

.tree, .tree ul {
  margin: 0;
  padding: 0;
  list-style: none;
}

.tree ul { margin-left: 15px; }

.tree .guide {
  margin-left: 7px;
  padding-left: 7px;
  border-left: 1px solid #50575e;
}

.node {
  display: flex;
  height: 12px;
  line-height: 12px;
  white-space: nowrap;
}

.node i {
  width: 15px;
  display: grid;
  place-items: center;
}

.node i::before { content: ""; border: 3px solid transparent; }
.node .open::before { border-top: 4px solid #626a72; border-bottom: 0; }
.node .closed::before { border-left: 4px solid #626a72; border-right: 0; }

.node .leaf::before { display: none; }

.node .leaf {
  background: linear-gradient(#50575e, #50575e) 7px 0 / 1px 12px no-repeat, linear-gradient(#50575e, #50575e) 7px 6px / 7px 1px no-repeat;
}

.label { padding-left: 2px; }

.selected {
  flex: 1;
  margin-right: 4px;
  background: #0a57a0;
  box-shadow: inset 0 0 0 1px #5d8dba;
}

/* Word */
.word {
  left: 1021px;
  right: 4px;
  top: 3px;
  bottom: 1px;
  background: #f0efef;
  color: #333;
}

.word-title {
  flex: none;
  display: flex;
  align-items: center;
  height: 35px;
  padding-left: 12px;
  color: #aaa;
}

.word-icon { width: 12px; height: 12px; stroke: none; }
.autosave { width: 40px; margin-left: 12px; }

.switch {
  display: flex;
  align-items: center;
  gap: 4px;
  width: 32px;
  height: 14px;
  margin-left: 4px;
  padding-left: 2px;
  border: 1px solid #ccc;
  border-radius: 7px;
  background: #fff;
  font-size: 8px;
}

.switch i { width: 10px; height: 10px; border-radius: 50%; background: #aaa; }
.save { margin: 0 22px 0 9px; width: 12px; height: 12px; }
.save svg { width: 12px; height: 12px; display: block; }
.doc-name { width: 178px; }

.search {
  display: flex;
  align-items: center;
  gap: 9px;
  flex: 1;
  max-width: 242px;
  height: 24px;
  padding-left: 15px;
  border: 1px solid #e2e1e1;
  border-radius: 2px;
}

.search svg { width: 12px; height: 12px; }
.search input::placeholder { color: #b0b0b0; }
.user { margin-left: auto; }

.avatar {
  width: 18px;
  height: 18px;
  margin: 0 20px 0 8px;
  border-radius: 50%;
  background: #57291c;
  color: #d8c2ba;
  font-size: 8px;
  line-height: 18px;
  text-align: center;
}

.pen svg { width: 13px; height: 13px; display: block; }
.pen { color: #444; margin-right: 10px; }
.winbtn { width: 36px; }
.winbtn svg { width: 9px; height: 9px; }

.tabs {
  flex: none;
  display: flex;
  align-items: center;
  gap: 16px;
  height: 23px;
  padding: 0 10px 0 130px;
}

.comments, .share {
  display: flex;
  align-items: center;
  justify-content: center;
  gap: 3px;
  height: 18px;
  border-radius: 2px;
  background: #fff;
  font-weight: bold;
}

.comments { width: 74px; margin-left: auto; border: 1px solid #e0e0e0; }
.share { width: 51px; margin-left: -9px; background: #1650b4; color: #fff; }
.comments svg, .share svg { width: 9px; height: 9px; }

/* the left end of the ribbon lies under the solver window */
.ribbon {
  flex: none;
  display: flex;
  height: 75px;
  margin-right: 7px;
  padding-left: 120px;
  background: #fff;
  border-radius: 0 0 5px 5px;
  box-shadow: 0 1px 3px rgba(0, 0, 0, 0.25);
}

.group {
  position: relative;
  display: flex;
  flex-direction: column;
  border-right: 1px solid #e0e0e0;
}

.font-group { width: 169px; }
.para-group { width: 144px; padding-left: 6px; }
.style-group { width: 270px; padding: 0 7px; }
.tools { display: flex; align-items: center; height: 20px; }
.tools:first-child { margin-top: 2px; }

.tools button {
  width: 19px;
  height: 18px;
  padding: 0;
  display: flex;
  align-items: center;
  justify-content: center;
  font-size: 10px;
}

.tools button svg { width: 13px; height: 13px; }
.tools .drop { width: 11px; }
.tools .drop svg { width: 7px; height: 7px; }
.tools .on { background: #e6e6e6; border-radius: 2px; }
.tools .grow { font-size: 12px; }
.tools sub, .tools sup { font-size: 6px; color: #2b78c5; }
.tools sub { margin-top: 7px; }
.tools sup { margin-bottom: 7px; }
.tools hr { width: 1px; height: 16px; margin: 0 2px; border: 0; background: #e0e0e0; }

.effects { font-weight: bold; color: #2b78c5; }
.tools .effects { font-size: 14px; }

.pick {
  position: relative;
  height: 17px;
  border: 1px solid #ddd;
  border-radius: 2px;
}

.pick select {
  appearance: none;
  display: block;
  width: 100%;
  height: 15px;
  padding-left: 1px;
}

.pick svg {
  position: absolute;
  right: 1px;
  top: 4px;
  width: 7px;
  height: 7px;
  pointer-events: none;
}

.font-name { width: 129px; border-left: 0; margin-right: 3px; }
.font-size { width: 31px; }

.group-name {
  margin-top: auto;
  height: 15px;
  line-height: 14px;
  text-align: center;
  font-size: 8px;
}

.group-name svg {
  position: absolute;
  right: 2px;
  bottom: 4px;
  width: 7px;
  height: 7px;
}

.gallery {
  display: flex;
  height: 45px;
  margin-top: 9px;
  border: 1px solid #ddd;
  border-radius: 2px;
}

.gallery > button { flex: 1; color: #111; white-space: nowrap; }
.gallery .current { border: 2px solid #bccce8; }
.gallery .heading { font-size: 13px; color: #5b7390; }
.gallery-nav { width: 12px; display: flex; flex-direction: column; border-left: 1px solid #ddd; }
.gallery-nav button { flex: 1; display: grid; place-items: center; border-bottom: 1px solid #ddd; }
.gallery-nav svg { width: 7px; height: 7px; }
.flip { transform: rotate(180deg); opacity: 0.4; }

.big { width: 41px; }
.big ~ .big { width: 43px; }

.big button {
  display: flex;
  flex-direction: column;
  align-items: center;
  padding-top: 5px;
}

.big-icon { width: 24px; height: 24px; }
.big-icon:has(use) { width: 13px; }
.big .small { width: 6px; height: 6px; margin-top: 2px; }
.collapse { margin: auto 7px 6px auto; }
.collapse svg { width: 9px; height: 9px; }

.canvas {
  flex: 1;
  min-height: 0;
  display: flex;
  flex-direction: column;
  padding: 13px 0 0 143px;
  overflow: hidden;
}

.page {
  flex: 1;
  width: 595px;
  padding: 70px 72px 0;
  background: #fff;
  border: 1px solid #dcdcdc;
  font-family: Lato, sans-serif;
  font-size: 22px;
  line-height: 32px;
  color: #111;
  white-space: nowrap;
}

.next { flex: none; height: 28px; margin-top: 11px; padding: 0; border-bottom: 0; }
.page p { margin: 0 0 7px; }
.page .question { margin: 8px 0 7px; color: #3d64a8; }
.page .light { color: #5b96cc; }

.status {
  flex: none;
  display: flex;
  align-items: center;
  height: 17px;
  padding: 0 13px 0 6px;
  background: #f6f5f5;
  font-family: Lato, sans-serif;
  font-size: 8px;
  color: #444;
}

.status svg { width: 10px; height: 10px; margin-right: 3px; }
.page-count { width: 52px; }
.words { width: 70px; }
.status .proof { margin-right: 13px; }
.lang { width: 102px; }

.view-tools {
  display: flex;
  align-items: center;
  margin-left: auto;
}

.focus { width: 25px; }
.minus { margin-left: 4px; }
.view-tools .view { width: 30px; height: 17px; display: grid; place-items: center; }
.view-tools .view svg { margin: 0; }
.view-tools .on { background: #dcdcdc; }

.view-tools input {
  appearance: none;
  width: 76px;
  height: 10px;
  margin: 0 4px;
  background: linear-gradient(#888, #888) 0 5px / 100% 1px no-repeat;
}

.view-tools input::-webkit-slider-thumb {
  appearance: none;
  width: 3px;
  height: 9px;
  background: #444;
}

.percent { margin-left: 11px; }

.pointer {
  position: absolute;
  left: 440px;
  top: 174px;
  width: 9px;
  height: 15px;
}

.brand {
  height: 33px;
  padding-right: 4px;
  display: flex;
  align-items: center;
  justify-content: flex-end;
  color: #fff;
  font-family: "Liberation Sans Narrow", "Liberation Sans", sans-serif;
  font-size: 24px;
  font-weight: bold;
}

.brand span { color: #2fd39a; }
.brand svg { width: 15px; height: 24px; }
```
